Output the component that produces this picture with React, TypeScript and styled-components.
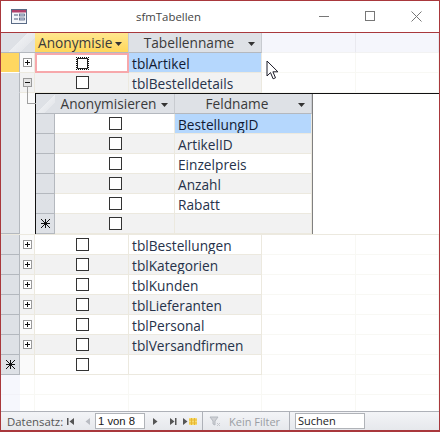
import React from 'react';
import styled, { createGlobalStyle } from 'styled-components';

const tables = ['tblBestellungen', 'tblKategorien', 'tblKunden', 'tblLieferanten', 'tblPersonal', 'tblVersandfirmen'];
const fields = ['BestellungID', 'ArtikelID', 'Einzelpreis', 'Anzahl', 'Rabatt'];

function Arrow() {
  return (
    <ArrowIcon width="7" height="4" viewBox="0 0 7 4">
      <path d="M0 0h7L3.5 4z" fill="#333" />
    </ArrowIcon>
  );
}

function NavIcon({ d, color = '#555' }: { d: string; color?: string }) {
  return (
    <NavButton>
      <svg width="9" height="9" viewBox="0 0 9 9">
        <path d={d} fill={color} />
      </svg>
    </NavButton>
  );
}

function App() {
  return (
    <>
      <GlobalStyle />
      <Window>
        <TitleBar>
          <FormIcon width="16" height="15" viewBox="0 0 16 15">
            <rect x="0.5" y="0.5" width="15" height="14" fill="#f4f6fa" stroke="#5a6b86" />
            <rect x="1" y="1" width="14" height="2.5" fill="#b0406a" />
            <path d="M3 6h4M3 10h4" stroke="#4a5a78" />
            <rect x="8.5" y="5" width="5" height="2" fill="#c9d3e3" stroke="#4a5a78" strokeWidth="0.7" />
            <rect x="8.5" y="9" width="5" height="2" fill="#c9d3e3" stroke="#4a5a78" strokeWidth="0.7" />
          </FormIcon>
          <Title>sfmTabellen</Title>
          <WindowButtons>
            <svg width="11" height="11" viewBox="0 0 11 11">
              <path d="M0 5.5h10" stroke="#777" />
            </svg>
            <svg width="11" height="11" viewBox="0 0 11 11">
              <rect x="0.5" y="0.5" width="9" height="9" fill="none" stroke="#777" />
            </svg>
            <svg width="11" height="11" viewBox="0 0 11 11">
              <path d="M0.5 0.5l10 10M10.5 0.5l-10 10" stroke="#777" />
            </svg>
          </WindowButtons>
        </TitleBar>

        <Sheet>
          <HeadRow>
            <Corner />
            <ActiveHeader>
              <span>Anonymisie</span>
              <Arrow />
            </ActiveHeader>
            <HeaderCell>
              <span>Tabellenname</span>
              <Arrow />
            </HeaderCell>
            <EmptyHeader />
            <EmptyHeader />
          </HeadRow>

          <Row>
            <Selector $current />
            <Expander>
              <ExpandBox>
                <PlusSign />
              </ExpandBox>
            </Expander>
            <FocusCell>
              <Check $focus />
            </FocusCell>
            <SelectedText>tblArtikel</SelectedText>
            <Blank />
            <Blank />
          </Row>

          <Row>
            <Selector $open />
            <Expander $alt>
              <ExpandBox $open>
                <MinusSign />
              </ExpandBox>
            </Expander>
            <CheckCell $alt>
              <Check />
            </CheckCell>
            <TextCell $alt>tblBestelldetails</TextCell>
            <Blank />
            <Blank />
          </Row>

          <SubRow>
            <Selector />
            <TreeGutter />
            <SubForm>
              <SubGrid>
                <SubLine>
                  <Corner />
                  <HeaderCell>
                    <span>Anonymisieren</span>
                    <Arrow />
                  </HeaderCell>
                  <HeaderCell>
                    <span>Feldname</span>
                    <Arrow />
                  </HeaderCell>
                </SubLine>
                {fields.map((f, i) => (
                  <SubLine key={f}>
                    <Selector />
                    <CheckCell $alt={i % 2 === 1}>
                      <Check />
                    </CheckCell>
                    {i === 0 ? <SelectedText>{f}</SelectedText> : <TextCell $alt={i % 2 === 1}>{f}</TextCell>}
                  </SubLine>
                ))}
                <SubLine>
                  <Selector>
                    <Star />
                  </Selector>
                  <CheckCell $alt>
                    <Check />
                  </CheckCell>
                  <TextCell $alt />
                </SubLine>
              </SubGrid>
            </SubForm>
          </SubRow>

          {tables.map((t, i) => (
            <Row key={t}>
              <Selector />
              <Expander $alt={i % 2 === 1}>
                <ExpandBox>
                  <PlusSign />
                </ExpandBox>
              </Expander>
              <CheckCell $alt={i % 2 === 1}>
                <Check />
              </CheckCell>
              <TextCell $alt={i % 2 === 1}>{t}</TextCell>
              <Blank />
              <Blank />
            </Row>
          ))}

          <Row>
            <Selector>
              <Star />
            </Selector>
            <Expander />
            <CheckCell>
              <Check />
            </CheckCell>
            <TextCell />
            <Blank />
            <Blank />
          </Row>

          <Row>
            <BlankSide />
            <Blank />
            <Blank />
            <Blank />
            <Blank />
            <Blank />
          </Row>
          <ShortRow>
            <BlankSide />
            <Blank />
            <Blank />
            <Blank />
            <Blank />
            <Blank />
          </ShortRow>

          <MouseCursor width="13" height="21" viewBox="0 0 13 21">
            <path d="M1 1v15l3.5-3.4 2.6 6.2 2.4-1-2.6-6h5z" fill="#fff" stroke="#1c1c28" strokeWidth="1" />
          </MouseCursor>
        </Sheet>

        <NavBar>
          <NavLabel>Datensatz:</NavLabel>
          <NavIcon d="M1 1h1.5v7H1zM8 1v7L3.5 4.5z" />
          <NavSpacer $w={4} />
          <NavIcon d="M7 1v7L2.5 4.5z" color="#b9bcc2" />
          <RecordBox>1 von 8</RecordBox>
          <NavIcon d="M2 1v7l4.5-3.5z" />
          <NavSpacer $w={5} />
          <NavIcon d="M1 1v7l4.5-3.5zM6 1h1.5v7H6z" />
          <NewRecord width="16" height="9" viewBox="0 0 16 9">
            <path d="M0 1v7l4.5-3.5z" fill="#555" />
            <rect x="6" y="1" width="8" height="7" fill="#f6dc74" />
            <path d="M6 3h8M6 6h8M8.5 1v7M11.5 1v7" stroke="#e8b730" />
          </NewRecord>
          <NavDivider />
          <FilterButton>
            <svg width="12" height="11" viewBox="0 0 12 11">
              <path d="M1 1h8L6 5v4l-2-1V5z" fill="#d0d2d6" stroke="#b4b8bf" />
              <path d="M8 7l3 3M11 7l-3 3" stroke="#c4c6cb" />
            </svg>
            <FilterLabel>Kein Filter</FilterLabel>
          </FilterButton>
          <NavDivider />
          <SearchBox>Suchen</SearchBox>
        </NavBar>
      </Window>
    </>
  );
}

const GlobalStyle = createGlobalStyle`
  html, body {
    margin: 0;
    padding: 0;
    background: #fff;
  }
  body {
    font-family: 'Open Sans', 'Noto Sans', sans-serif;
    font-size: 13.7px;
  }
  * {
    box-sizing: border-box;
  }
`;

const Window = styled.div`
  width: 440px;
  height: 432px;
  display: flex;
  flex-direction: column;
  background: #fff;
  border: 1px solid #a9383c;
  border-bottom-width: 2px;
  overflow: hidden;
`;

const TitleBar = styled.div`
  height: 32px;
  flex: none;
  display: flex;
  align-items: center;
  padding-left: 10px;
  border-bottom: 1px solid #a9383c;
`;

const FormIcon = styled.svg`
  flex: none;
`;

const Title = styled.div`
  margin-left: 109px;
  font-size: 11.4px;
  color: #444;
`;

const WindowButtons = styled.div`
  margin-left: auto;
  margin-right: 17px;
  display: flex;
  gap: 35px;
`;

const Sheet = styled.div`
  position: relative;
  flex: 1;
  min-height: 0;
  overflow: hidden;
`;

const Row = styled.div`
  display: grid;
  grid-template-columns: 19px 15px 94px 133px 94px 1fr;
  height: 20px;
`;

const HeadRow = styled(Row)`
  grid-template-columns: 34px 94px 133px 94px 1fr;
`;

const ShortRow = styled(Row)`
  height: 18px;
`;

const Corner = styled.div`
  background: #dee1e6;
  background-image: linear-gradient(135deg, transparent 50%, #eceef1 50%, #e6e8ec 72%, transparent 72%);
  border-bottom: 1px solid #b4b8be;
`;

const HeaderCell = styled.div`
  min-width: 0;
  display: flex;
  align-items: center;
  justify-content: center;
  position: relative;
  padding-right: 12px;
  background: #dee1e6;
  border-right: 1px solid #c8cbd0;
  border-bottom: 1px solid #b4b8be;
  color: #3a3a3a;
  overflow: hidden;
  white-space: nowrap;
`;

const ActiveHeader = styled(HeaderCell)`
  background: linear-gradient(#ffe78f, #ffd75a);
  justify-content: flex-start;
  padding: 0 0 0 3px;
`;

const ArrowIcon = styled.svg`
  position: absolute;
  right: 6px;
  top: 9px;
`;

const EmptyHeader = styled.div`
  background: #f5f6fc;
  border-right: 1px solid #e9e9ef;
  border-bottom: 1px solid #f2f2f2;
`;

const Selector = styled.div<{ $current?: boolean; $open?: boolean }>`
  display: flex;
  align-items: center;
  justify-content: center;
  background: ${(p) => (p.$current ? '#ffd760' : '#dee1e6')};
  border-right: 1px solid #b4b8be;
  border-bottom: 1px solid ${(p) => (p.$current || p.$open ? 'transparent' : '#b4b8be')};
  background-clip: padding-box;
  box-shadow: ${(p) => (p.$open ? '0 1px 0 #dee1e6' : 'none')};
`;

const BlankSide = styled.div`
  background: #f6f7fd;
  border-bottom: 1px solid #f2f2f8;
`;

const Star = styled.span`
  display: block;
  width: 9px;
  height: 9px;
  background:
    linear-gradient(#111, #111) center / 9px 1px no-repeat,
    linear-gradient(#111, #111) center / 1px 9px no-repeat,
    linear-gradient(45deg, transparent 46%, #111 46%, #111 54%, transparent 54%),
    linear-gradient(-45deg, transparent 46%, #111 46%, #111 54%, transparent 54%);
`;

const Expander = styled.div<{ $alt?: boolean }>`
  display: flex;
  align-items: center;
  justify-content: center;
  background: ${(p) => (p.$alt ? '#f2f2f2' : '#fafafa')};
  border-right: 1px solid #ece9df;
  border-bottom: 1px solid #ece9df;
`;

const ExpandBox = styled.div<{ $open?: boolean }>`
  position: relative;
  width: 9px;
  height: 9px;
  background: ${(p) => (p.$open ? '#e4e4e4' : '#fff')};
  border: 1px solid #9a9a9a;
`;

const MinusSign = styled.span`
  position: absolute;
  left: 1px;
  top: 3px;
  width: 5px;
  height: 1px;
  background: #111;
`;

const PlusSign = styled(MinusSign)`
  &::after {
    content: '';
    position: absolute;
    left: 2px;
    top: -2px;
    width: 1px;
    height: 5px;
    background: #111;
  }
`;

const CheckCell = styled.div<{ $alt?: boolean }>`
  display: flex;
  align-items: center;
  justify-content: center;
  padding-left: 2px;
  background: ${(p) => (p.$alt ? '#f2f2f2' : '#fff')};
  border-right: 1px solid #ece9df;
  border-bottom: 1px solid #ece9df;
`;

const FocusCell = styled(CheckCell)`
  border: 2px solid #f7a8ab;
  padding-left: 1px;
`;

const Check = styled.div<{ $focus?: boolean }>`
  width: 13px;
  height: 13px;
  background: #fff;
  border: ${(p) => (p.$focus ? '1px dotted #111' : '1px solid #333')};
  box-shadow: ${(p) => (p.$focus ? 'inset 0 0 0 1px #222' : 'none')};
`;

const TextCell = styled.div<{ $alt?: boolean }>`
  display: flex;
  align-items: center;
  padding: 1px 0 0 3px;
  background: ${(p) => (p.$alt ? '#f2f2f2' : '#fff')};
  border-right: 1px solid #ece9df;
  border-bottom: 1px solid #ece9df;
  color: #26324a;
  white-space: nowrap;
  overflow: hidden;
`;

const SelectedText = styled(TextCell)`
  background: #b5d7fd;
  color: #111a33;
`;

const Blank = styled.div`
  border-right: 1px solid #f8f8f4;
  border-bottom: 1px solid #f8f8f4;
`;

const SubRow = styled.div`
  display: grid;
  grid-template-columns: 19px 15px 1fr;
  height: 142px;
  border-bottom: 1px solid #ece9df;
`;

const TreeGutter = styled.div`
  position: relative;
  background: #fafafa;

  &::before {
    content: '';
    position: absolute;
    left: 7px;
    top: -7px;
    width: 8px;
    height: 17px;
    border-left: 1px solid #a0a0a0;
    border-bottom: 1px solid #a0a0a0;
  }
`;

const SubForm = styled.div`
  background: #fff;
  border-top: 1px solid #111;
  border-left: 1px solid #111;
`;

const SubGrid = styled.div`
  width: 277px;
  border-right: 1px solid #808080;
`;

const SubLine = styled.div`
  display: grid;
  grid-template-columns: 19px 120px 137px;
  height: 20px;
`;

const NavBar = styled.div`
  height: 19px;
  flex: none;
  display: flex;
  align-items: center;
  padding-left: 6px;
  background: linear-gradient(#f3f4f7, #e6e8ec);
  border-top: 1px solid #aeb1b8;
  color: #444;
  font-size: 11px;
`;

const NavLabel = styled.span`
  width: 57px;
  flex: none;
  font-size: 11.4px;
  color: #555;
`;

const NavButton = styled.div`
  width: 13px;
  flex: none;
  display: flex;
  justify-content: center;
`;

const NavSpacer = styled.div<{ $w: number }>`
  width: ${(p) => p.$w}px;
  flex: none;
`;

const NewRecord = styled.svg`
  flex: none;
  margin: 0 3px;
`;

const RecordBox = styled.div`
  width: 50px;
  height: 16px;
  flex: none;
  margin: 0 4px 0 1px;
  padding-left: 2px;
  background: #fff;
  border: 1px solid #b0b3b8;
  font-family: 'Liberation Sans', sans-serif;
  font-size: 11.3px;
  line-height: 14px;
  color: #1a1a1a;
`;

const NavDivider = styled.div`
  width: 1px;
  height: 18px;
  background: #aeb1b8;
  flex: none;
`;

const FilterButton = styled.div`
  width: 86px;
  flex: none;
  display: flex;
  align-items: center;
  gap: 8px;
  padding-left: 6px;
  white-space: nowrap;
`;

const FilterLabel = styled.span`
  color: #9a9da3;
`;

const SearchBox = styled.div`
  width: 70px;
  height: 16px;
  flex: none;
  margin-left: 5px;
  padding-left: 2px;
  background: #fff;
  border: 1px solid #b0b3b8;
  font-size: 11px;
  line-height: 14px;
  color: #1a1a1a;
`;

const MouseCursor = styled.svg`
  position: absolute;
  left: 265px;
  top: 27px;
`;

export default App;
